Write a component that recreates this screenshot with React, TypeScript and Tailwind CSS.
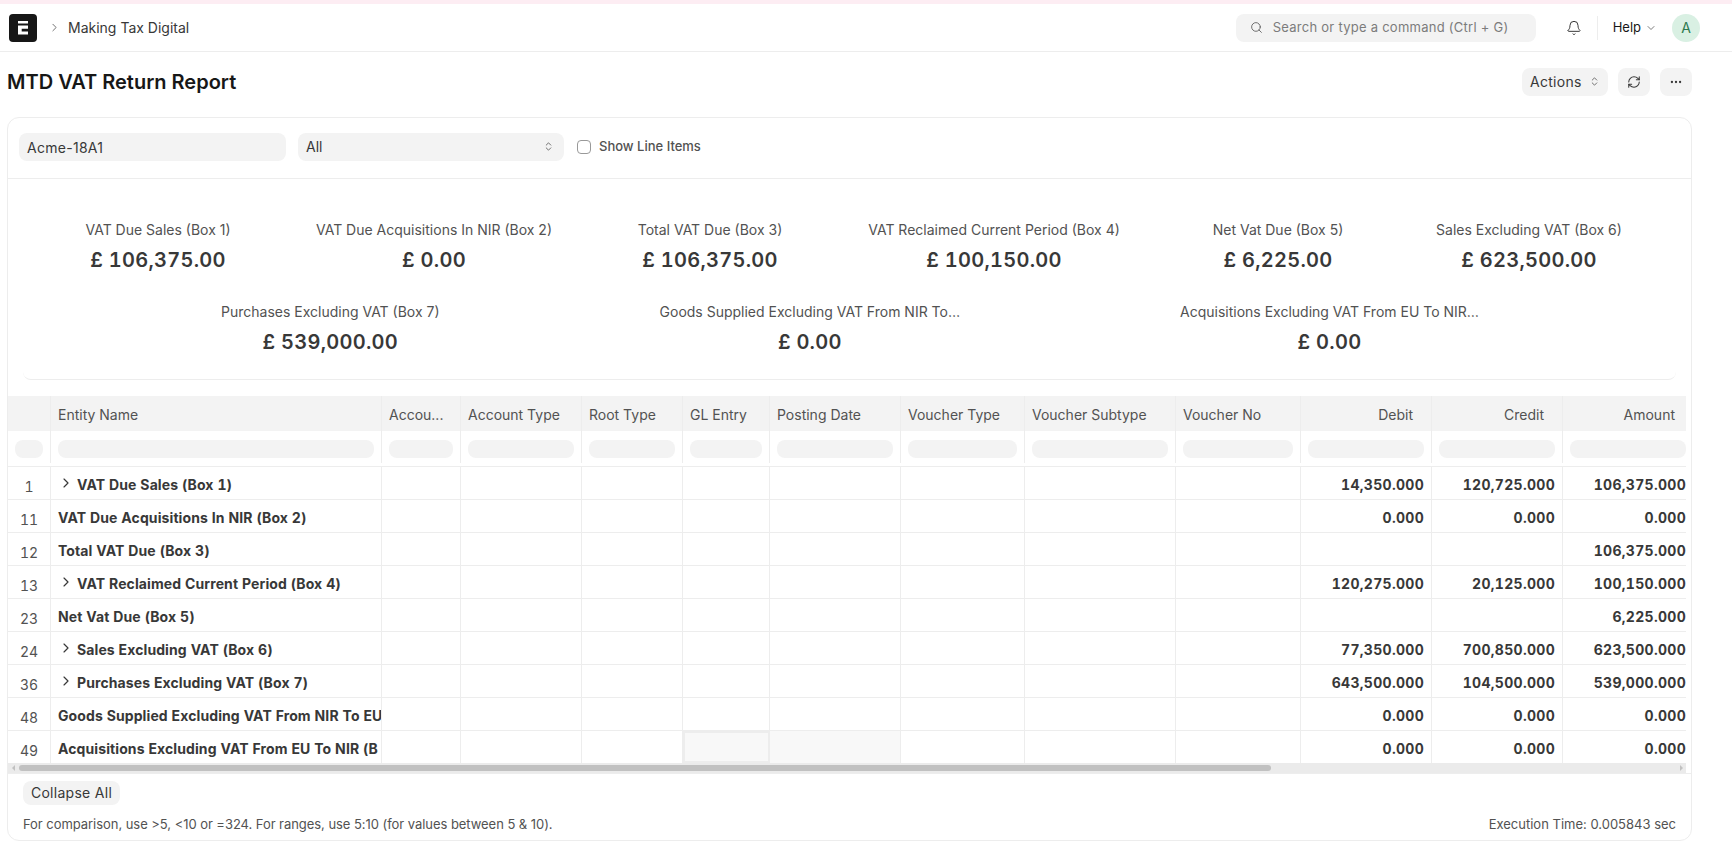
import { Bell, ChevronDown, ChevronRight, ChevronsUpDown, Ellipsis, RefreshCw, Search } from "lucide-react";

const gridCols =
  "grid grid-cols-[43px_331px_79px_121px_101px_87px_131px_124px_151px_125px_131px_131px_131px] w-[1686px]";

const headers = [
  { label: "", right: false },
  { label: "Entity Name", right: false },
  { label: "Accou...", right: false },
  { label: "Account Type", right: false },
  { label: "Root Type", right: false },
  { label: "GL Entry", right: false },
  { label: "Posting Date", right: false },
  { label: "Voucher Type", right: false },
  { label: "Voucher Subtype", right: false },
  { label: "Voucher No", right: false },
  { label: "Debit", right: true },
  { label: "Credit", right: true },
  { label: "Amount", right: true },
];

const rows = [
  { no: "1", name: "VAT Due Sales (Box 1)", tree: true, debit: "14,350.000", credit: "120,725.000", amount: "106,375.000" },
  { no: "11", name: "VAT Due Acquisitions In NIR (Box 2)", tree: false, debit: "0.000", credit: "0.000", amount: "0.000" },
  { no: "12", name: "Total VAT Due (Box 3)", tree: false, debit: "", credit: "", amount: "106,375.000" },
  { no: "13", name: "VAT Reclaimed Current Period (Box 4)", tree: true, debit: "120,275.000", credit: "20,125.000", amount: "100,150.000" },
  { no: "23", name: "Net Vat Due (Box 5)", tree: false, debit: "", credit: "", amount: "6,225.000" },
  { no: "24", name: "Sales Excluding VAT (Box 6)", tree: true, debit: "77,350.000", credit: "700,850.000", amount: "623,500.000" },
  { no: "36", name: "Purchases Excluding VAT (Box 7)", tree: true, debit: "643,500.000", credit: "104,500.000", amount: "539,000.000" },
  { no: "48", name: "Goods Supplied Excluding VAT From NIR To EU", tree: false, debit: "0.000", credit: "0.000", amount: "0.000" },
  { no: "49", name: "Acquisitions Excluding VAT From EU To NIR (B", tree: false, debit: "0.000", credit: "0.000", amount: "0.000" },
];

const summaryTop = [
  { label: "VAT Due Sales (Box 1)", value: "£ 106,375.00" },
  { label: "VAT Due Acquisitions In NIR (Box 2)", value: "£ 0.00" },
  { label: "Total VAT Due (Box 3)", value: "£ 106,375.00" },
  { label: "VAT Reclaimed Current Period (Box 4)", value: "£ 100,150.00" },
  { label: "Net Vat Due (Box 5)", value: "£ 6,225.00" },
  { label: "Sales Excluding VAT (Box 6)", value: "£ 623,500.00" },
];

const summaryBottom = [
  { label: "Purchases Excluding VAT (Box 7)", value: "£ 539,000.00" },
  { label: "Goods Supplied Excluding VAT From NIR To…", value: "£ 0.00" },
  { label: "Acquisitions Excluding VAT From EU To NIR…", value: "£ 0.00" },
];

function SummaryItem({ label, value }: { label: string; value: string }) {
  return (
    <div className="flex flex-col items-center whitespace-nowrap">
      <div className="text-[14px] leading-5 text-[#525252]">{label}</div>
      <div className="mt-[6px] text-[20px] leading-7 font-semibold tabular-nums tracking-[0.28px] text-[#383838]">{value}</div>
    </div>
  );
}

export default function App() {
  return (
    <div className="w-[1732px] h-[843px] overflow-hidden bg-white font-['Inter',sans-serif] text-[#383838]">
      <div className="h-[4px] bg-[#fdedf3]"></div>

      {/* navbar */}
      <div className="h-[48px] border-b border-[#ededed] flex items-center pl-[9px] pr-[32px]">
        <svg viewBox="0 0 28 28" className="w-[28px] h-[28px] shrink-0">
          <rect width="28" height="28" rx="4" fill="#171717" />
          <path d="M9 7h10v2.5H9z M9 11.5h10v3.2h-6.3v2.8H19v3H9z" fill="#fff" />
        </svg>
        <ChevronRight className="w-[13px] h-[13px] ml-[11px] text-[#525252]" strokeWidth={1.5} />
        <span className="ml-[7px] text-[14px] text-[#383838]">Making Tax Digital</span>

        <div className="ml-auto w-[300px] h-[28px] rounded-lg bg-[#f3f3f3] flex items-center pl-[14px]">
          <Search className="w-[13px] h-[13px] text-[#525252]" strokeWidth={1.5} />
          <span className="ml-[10px] text-[13px] tracking-[0.02em] text-[#7c7c7c]">Search or type a command (Ctrl + G)</span>
        </div>
        <Bell className="ml-[30px] w-[16px] h-[16px] text-[#383838]" strokeWidth={1.5} />
        <div className="ml-[15px] w-px h-[24px] bg-[#ededed]"></div>
        <span className="ml-[15px] text-[13px] text-[#171717]">Help</span>
        <ChevronDown className="ml-[4px] w-[12px] h-[12px] text-[#525252]" strokeWidth={1.5} />
        <div className="ml-[15px] w-[28px] h-[28px] rounded-full bg-[#d9f0e3] flex items-center justify-center text-[14px] text-[#2c7a4f]">
          A
        </div>
      </div>

      {/* page head */}
      <div className="h-[65px] pt-4 pl-[7px] pr-[40px] flex items-start justify-between">
        <h1 className="h-[28px] leading-7 text-[20px] font-semibold text-[#171717]">MTD VAT Return Report</h1>
        <div className="flex gap-[10px]">
          <button className="h-[28px] w-[86px] rounded-lg bg-[#f3f3f3] flex items-center pl-[8px] pb-[1px] text-[14px] tracking-[0.02em] text-[#383838]">
            Actions
            <ChevronsUpDown className="ml-[7px] w-[11px] h-[11px] text-[#383838]" strokeWidth={1.5} />
          </button>
          <button className="h-[28px] w-[32px] rounded-lg bg-[#f3f3f3] flex items-center justify-center">
            <RefreshCw className="w-[14px] h-[14px] text-[#383838]" strokeWidth={1.75} />
          </button>
          <button className="h-[28px] w-[32px] rounded-lg bg-[#f3f3f3] flex items-center justify-center">
            <Ellipsis className="w-[14px] h-[14px] text-[#383838]" strokeWidth={2} />
          </button>
        </div>
      </div>

      {/* report card */}
      <div className="ml-[7px] w-[1685px] h-[724px] border border-[#ededed] rounded-xl overflow-hidden">
        <div className="h-[61px] border-b border-[#ededed] pt-[15px] pl-[11px] flex items-start">
          <div className="w-[267px] h-[28px] rounded-lg bg-[#f3f3f3] flex items-center pl-[8px] text-[14px] tracking-[0.02em]">Acme-18A1</div>
          <div className="ml-[12px] w-[266px] h-[28px] rounded-lg bg-[#f3f3f3] flex items-center justify-between pl-[8px] pr-[10px] pb-[1px] text-[14px]">
            All
            <ChevronsUpDown className="w-[11px] h-[11px] text-[#383838]" strokeWidth={1.5} />
          </div>
          <div className="ml-[13px] h-[28px] flex items-center">
            <div className="w-[14px] h-[14px] rounded-[4px] border border-[#999999] bg-white"></div>
            <span className="ml-[8px] text-[13px] font-medium text-[#525252]">Show Line Items</span>
          </div>
        </div>

        {/* summary */}
        <div className="mx-[15px] h-[201px] pt-[41px] border-b border-[#ededed] rounded-b-lg">
          <div className="-ml-[3px] grid grid-cols-[276px_276px_276px_292px_276px_226px] justify-items-center">
            {summaryTop.map((s) => (
              <SummaryItem key={s.label} label={s.label} value={s.value} />
            ))}
          </div>
          <div className="mt-[28px] flex justify-around pl-[88px] pr-[87px]">
            {summaryBottom.map((s) => (
              <SummaryItem key={s.label} label={s.label} value={s.value} />
            ))}
          </div>
        </div>

        {/* datatable */}
        <div className="mt-[16px] w-[1678px] overflow-hidden">
          <div className={`${gridCols} h-[35px] bg-[#f3f3f3]`}>
            {headers.map((h, i) => (
              <div
                key={i}
                className={
                  h.right
                    ? "border-r border-[#ededed] flex items-center justify-end pt-[2px] pr-[18px] text-[14px] text-[#525252] whitespace-nowrap"
                    : "border-r border-[#ededed] flex items-center pt-[2px] pl-[7px] text-[14px] text-[#525252] whitespace-nowrap"
                }
              >
                {h.label}
              </div>
            ))}
          </div>

          <div className={`${gridCols} h-[36px] border-b border-[#ededed]`}>
            {headers.map((h, i) => (
              <div key={i} className="border-r border-[#ededed] pt-[9px] pl-[7px] pr-[7px] h-[32px]">
                <div className="h-[18px] rounded-lg bg-[#f3f3f3]"></div>
              </div>
            ))}
          </div>

          {rows.map((r, idx) => {
            const last = idx === rows.length - 1;
            return (
              <div key={r.no} className={last ? `${gridCols} h-[32px]` : `${gridCols} h-[33px] border-b border-[#ededed]`}>
                <div className="border-r border-[#ededed] flex items-center justify-center pt-[7px] text-[14px] tabular-nums text-[#525252]">
                  {r.no}
                </div>
                <div className="border-r border-[#ededed] flex items-center pt-[3px] pl-[7px] overflow-hidden text-[14px] font-bold tabular-nums tracking-[0.007em] text-[#383838] whitespace-nowrap">
                  {r.tree && <ChevronRight className="-mt-[3px] mr-[3px] w-[16px] h-[16px] shrink-0 text-[#383838]" strokeWidth={1.75} />}
                  {r.name}
                </div>
                <div className="border-r border-[#ededed]"></div>
                <div className="border-r border-[#ededed]"></div>
                <div className="border-r border-[#ededed]"></div>
                {last ? (
                  <div className="border-2 border-[#ededed] bg-[#f8f8f8]"></div>
                ) : (
                  <div className="border-r border-[#ededed]"></div>
                )}
                <div className={last ? "border-r border-[#ededed] bg-[#f8f8f8]" : "border-r border-[#ededed]"}></div>
                <div className="border-r border-[#ededed]"></div>
                <div className="border-r border-[#ededed]"></div>
                <div className="border-r border-[#ededed]"></div>
                {[r.debit, r.credit, r.amount].map((v, i) => (
                  <div key={i} className="border-r border-[#ededed] flex items-center justify-end pt-[3px] pr-[7px] text-[14px] font-bold tabular-nums tracking-[0.3px] text-[#383838]">
                    {v}
                  </div>
                ))}
              </div>
            );
          })}

          {/* horizontal scrollbar */}
          <div className="h-[10px] bg-[#ebebeb] flex items-center">
            <span className="w-[11px] flex justify-center">
              <span className="border-y-[3px] border-r-[3px] border-y-transparent border-r-[#c1c1c1]"></span>
            </span>
            <div className="w-[1252px] h-[6px] rounded-full bg-[#c1c1c1]"></div>
            <span className="ml-auto w-[10px] flex justify-center">
              <span className="border-y-[3px] border-l-[3px] border-y-transparent border-l-[#c1c1c1]"></span>
            </span>
          </div>
        </div>

        <div className="border-t border-[#ededed] pt-[6px] pl-[15px] pr-[15px]">
          <button className="h-[24px] w-[97px] rounded-lg bg-[#f3f3f3] text-[14px] tracking-[0.02em] text-[#383838]">Collapse All</button>
          <div className="mt-[10px] flex justify-between text-[13px] leading-[18px] text-[#525252]">
            <span className="tracking-[-0.05px]">For comparison, use &gt;5, &lt;10 or =324. For ranges, use 5:10 (for values between 5 &amp; 10).</span>
            <span>Execution Time: 0.005843 sec</span>
          </div>
        </div>
      </div>
    </div>
  );
}
